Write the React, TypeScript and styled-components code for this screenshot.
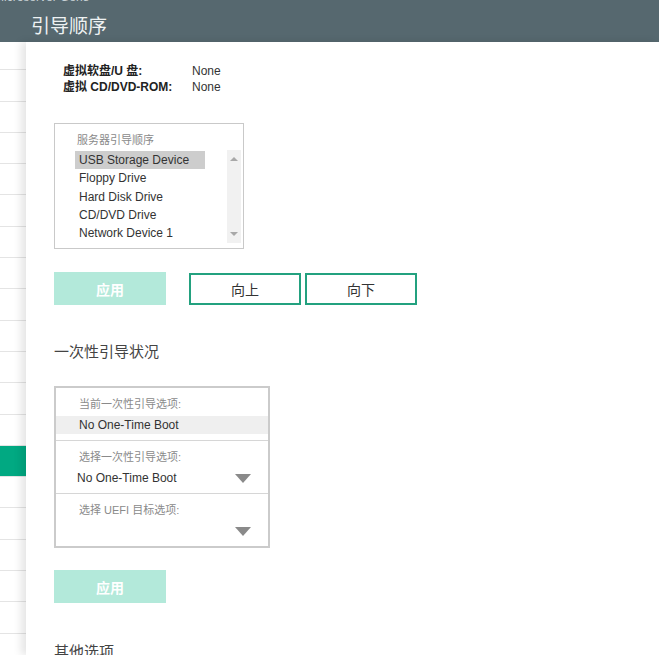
import { createGlobalStyle } from 'styled-components'
import styled from 'styled-components'

const GlobalStyle = createGlobalStyle`
  html, body {
    margin: 0;
    padding: 0;
    background: #ffffff;
    overflow: hidden;
  }
  body {
    font-family: 'Liberation Sans', 'Noto Sans CJK SC', sans-serif;
    color: #333333;
  }
`

const Page = styled.div`
  width: 659px;
  height: 655px;
  display: flex;
  flex-direction: column;
  overflow: hidden;
`

const Header = styled.header`
  height: 42px;
  flex: 0 0 42px;
  background: #56686f;
  display: flex;
  flex-direction: column;
  overflow: hidden;
`

const AppName = styled.div`
  margin: -10px 0 0 -6px;
  height: 14px;
  font-size: 12px;
  line-height: 14px;
  color: #c9d2d6;
`

const PanelTitle = styled.h1`
  margin: 11px 0 0 31px;
  font-size: 19px;
  line-height: 24px;
  font-weight: 400;
  color: #eef2f3;
`

const Body = styled.div`
  flex: 1;
  display: flex;
  min-height: 0;
`

const Sidebar = styled.nav`
  width: 26px;
  flex: 0 0 26px;
  display: flex;
  flex-direction: column;
`

const NavRow = styled.div<{ $active?: boolean; $first?: boolean }>`
  flex: 0 0 ${(p) => (p.$first ? '27.3px' : '30.3px')};
  border-bottom: 1px solid #e4e4e4;
  background: ${(p) => (p.$active ? '#01a982' : '#ffffff')};
`

const Panel = styled.main`
  flex: 1;
  position: relative;
  z-index: 1;
  background: #ffffff;
  box-shadow: -5px 0 8px rgba(0, 0, 0, 0.1);
  padding: 21px 0 0 28px;
  display: flex;
  flex-direction: column;
  align-items: flex-start;
`

const InfoGrid = styled.dl`
  margin: 0 0 0 9px;
  display: grid;
  grid-template-columns: 129px auto;
  font-size: 12px;
  line-height: 16px;
`

const InfoLabel = styled.dt`
  font-weight: 700;
  color: #222222;
`

const InfoValue = styled.dd`
  margin: 0;
  color: #333333;
`

const ListBox = styled.div`
  margin-top: 28px;
  width: 168px;
  border: 1px solid #c9c9c9;
  padding: 8px 0 5px 20px;
`

const FieldLabel = styled.div<{ $indent?: number }>`
  font-size: 11px;
  line-height: 16px;
  color: #8a8a8a;
  padding-left: ${(p) => p.$indent ?? 0}px;
`

const ListRow = styled.div`
  margin-top: 3px;
  display: flex;
  align-items: flex-start;
`

const Options = styled.ul`
  margin: 0;
  padding: 0;
  list-style: none;
  width: 130px;
`

const Option = styled.li<{ $selected?: boolean }>`
  height: 18.3px;
  line-height: 18.3px;
  padding-left: 4px;
  font-size: 12px;
  color: #333333;
  background: ${(p) => (p.$selected ? '#cdcdcd' : 'transparent')};
`

const ScrollTrack = styled.div`
  margin: -1px 2px 0 auto;
  width: 14px;
  height: 93px;
  background: #f1f1f1;
  display: flex;
  flex-direction: column;
  justify-content: space-between;
  align-items: center;
  padding: 7px 0;
  box-sizing: border-box;
`

const Arrow = styled.div<{ $down?: boolean }>`
  width: 0;
  height: 0;
  border-left: 4px solid transparent;
  border-right: 4px solid transparent;
  ${(p) =>
    p.$down ? 'border-top: 4px solid #a8a8a8;' : 'border-bottom: 4px solid #a8a8a8;'}
`

const ButtonRow = styled.div<{ $top: number }>`
  margin-top: ${(p) => p.$top}px;
  display: flex;
  align-items: center;
`

const ApplyButton = styled.button<{ $gap?: number }>`
  width: 112px;
  height: 33px;
  margin-right: ${(p) => p.$gap ?? 0}px;
  border: none;
  background: #b3e9da;
  color: #ffffff;
  font-family: inherit;
  font-size: 14px;
  font-weight: 700;
  cursor: default;
`

const OutlineButton = styled.button<{ $gap?: number }>`
  width: 112px;
  height: 32px;
  margin-right: ${(p) => p.$gap ?? 0}px;
  border: 2px solid #23a17f;
  background: #ffffff;
  color: #333333;
  font-family: inherit;
  font-size: 14px;
  padding: 0;
`

const SectionTitle = styled.h2<{ $top: number }>`
  margin: ${(p) => p.$top}px 0 0;
  font-size: 15px;
  line-height: 20px;
  font-weight: 400;
  color: #444444;
`

const BootBox = styled.div`
  margin-top: 24px;
  width: 212px;
  border: 2px solid #cbcbcb;
  display: flex;
  flex-direction: column;
`

const BootSection = styled.div`
  padding: 8px 0 6px;
  & + & {
    border-top: 1px solid #d6d6d6;
  }
`

const ValueRow = styled.div<{ $shaded?: boolean; $indent: number }>`
  margin-top: 4px;
  height: 18px;
  display: flex;
  align-items: center;
  padding: 0 17px 0 ${(p) => p.$indent}px;
  font-size: 12px;
  color: #333333;
  background: ${(p) => (p.$shaded ? '#efefef' : 'transparent')};
`

const Caret = styled.div`
  margin-left: auto;
  width: 0;
  height: 0;
  border-left: 8px solid transparent;
  border-right: 8px solid transparent;
  border-top: 9px solid #8a8a8a;
`

const bootOrder = [
  'USB Storage Device',
  'Floppy Drive',
  'Hard Disk Drive',
  'CD/DVD Drive',
  'Network Device 1',
]

export default function App() {
  const navRows = Array.from({ length: 20 }, (_, i) => i)

  return (
    <Page>
      <GlobalStyle />
      <Header>
        <AppName>Microserver Gen8</AppName>
        <PanelTitle>引导顺序</PanelTitle>
      </Header>
      <Body>
        <Sidebar>
          {navRows.map((i) => (
            <NavRow key={i} $first={i === 0} $active={i === 13} />
          ))}
        </Sidebar>
        <Panel>
          <InfoGrid>
            <InfoLabel>虚拟软盘/U 盘:</InfoLabel>
            <InfoValue>None</InfoValue>
            <InfoLabel>虚拟 CD/DVD-ROM:</InfoLabel>
            <InfoValue>None</InfoValue>
          </InfoGrid>

          <ListBox>
            <FieldLabel $indent={2}>服务器引导顺序</FieldLabel>
            <ListRow>
              <Options>
                {bootOrder.map((item, i) => (
                  <Option key={item} $selected={i === 0}>
                    {item}
                  </Option>
                ))}
              </Options>
              <ScrollTrack>
                <Arrow />
                <Arrow $down />
              </ScrollTrack>
            </ListRow>
          </ListBox>

          <ButtonRow $top={23}>
            <ApplyButton $gap={23}>应用</ApplyButton>
            <OutlineButton $gap={4}>向上</OutlineButton>
            <OutlineButton>向下</OutlineButton>
          </ButtonRow>

          <SectionTitle $top={37}>一次性引导状况</SectionTitle>

          <BootBox>
            <BootSection>
              <FieldLabel $indent={23}>当前一次性引导选项:</FieldLabel>
              <ValueRow $shaded $indent={23}>No One-Time Boot</ValueRow>
            </BootSection>
            <BootSection>
              <FieldLabel $indent={23}>选择一次性引导选项:</FieldLabel>
              <ValueRow $indent={21}>
                No One-Time Boot
                <Caret />
              </ValueRow>
            </BootSection>
            <BootSection>
              <FieldLabel $indent={23}>选择 UEFI 目标选项:</FieldLabel>
              <ValueRow $indent={21}>
                <Caret />
              </ValueRow>
            </BootSection>
          </BootBox>

          <ButtonRow $top={22}>
            <ApplyButton>应用</ApplyButton>
          </ButtonRow>

          <SectionTitle $top={39}>其他选项</SectionTitle>
        </Panel>
      </Body>
    </Page>
  )
}
